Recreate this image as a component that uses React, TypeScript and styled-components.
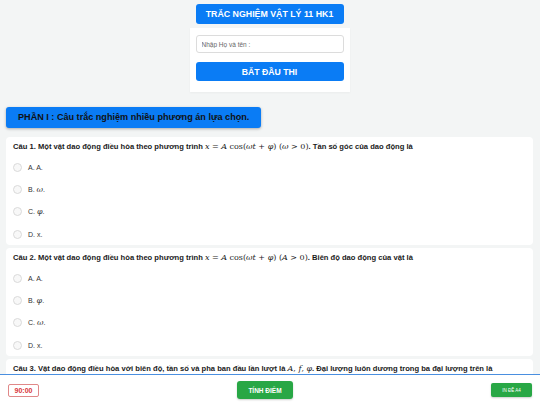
import React from 'react';
import styled, { createGlobalStyle } from 'styled-components';

type Question = {
  label: string;
  text: React.ReactNode;
  options: React.ReactNode[];
};

const M = ({ children }: { children: React.ReactNode }) => <MathSpan>{children}</MathSpan>;

const questions: Question[] = [
  {
    label: 'Câu 1.',
    text: (
      <>
        Một vật dao động điều hòa theo phương trình <M><i>x</i> = <i>A</i> cos(<i>ωt</i> + <i>φ</i>) (<i>ω</i> &gt; 0)</M>. Tần số góc của dao động là
      </>
    ),
    options: ['A. A.', <>B. <M><i>ω</i></M>.</>, <>C. <M><i>φ</i></M>.</>, 'D. x.'],
  },
  {
    label: 'Câu 2.',
    text: (
      <>
        Một vật dao động điều hòa theo phương trình <M><i>x</i> = <i>A</i> cos(<i>ωt</i> + <i>φ</i>) (<i>A</i> &gt; 0)</M>. Biên độ dao động của vật là
      </>
    ),
    options: ['A. A.', <>B. <M><i>φ</i></M>.</>, <>C. <M><i>ω</i></M>.</>, 'D. x.'],
  },
  {
    label: 'Câu 3.',
    text: (
      <>
        Vật dao động điều hòa với biên độ, tần số và pha ban đầu lần lượt là <M><i>A</i>, <i>f</i>, <i>φ</i></M>. Đại lượng luôn dương trong ba đại lượng trên là
      </>
    ),
    options: ['A. A.', 'B. f.', 'C. φ.', 'D. không có.'],
  },
];

export default function App() {
  return (
    <>
      <GlobalStyle />
      <Screen>
        <Main>
          <Header>
            <TitleButton>TRẮC NGHIỆM VẬT LÝ 11 HK1</TitleButton>
            <StartCard>
              <NameInput placeholder="Nhập Họ và tên :" />
              <StartButton>BẮT ĐẦU THI</StartButton>
            </StartCard>
          </Header>

          <SectionTitle>PHẦN I : Câu trắc nghiệm nhiều phương án lựa chọn.</SectionTitle>

          <QuestionList>
            {questions.map((q, qi) => (
              <QuestionCard key={qi}>
                <QuestionText>
                  <b>{q.label}</b> {q.text}
                </QuestionText>
                {q.options.map((opt, oi) => (
                  <Option key={oi}>
                    <Radio type="radio" name={`q${qi}`} />
                    <span>{opt}</span>
                  </Option>
                ))}
              </QuestionCard>
            ))}
          </QuestionList>
        </Main>

        <Footer>
          <Timer>90:00</Timer>
          <ScoreButton>TÍNH ĐIỂM</ScoreButton>
          <PrintButton>IN ĐỀ A4</PrintButton>
        </Footer>
      </Screen>
    </>
  );
}

const GlobalStyle = createGlobalStyle`
  * { box-sizing: border-box; }
  body {
    margin: 0;
    background: #f3f5f5;
    font-family: "Liberation Sans", Arial, sans-serif;
    color: #222;
    overflow: hidden;
  }
`;

const Screen = styled.div`
  height: 100vh;
  display: flex;
  flex-direction: column;
`;

const Main = styled.div`
  flex: 1;
  min-height: 0;
  overflow: hidden;
  padding: 4px 7px 0 6px;
`;

const Header = styled.div`
  display: flex;
  flex-direction: column;
  align-items: center;
  gap: 4px;
`;

const TitleButton = styled.div`
  width: 148px;
  height: 20px;
  display: flex;
  align-items: center;
  justify-content: center;
  background: #0a7cf5;
  color: #fff;
  font-weight: bold;
  font-size: 8.8px;
  border-radius: 3px;
`;

const StartCard = styled.div`
  width: 160px;
  background: #fff;
  padding: 7px 6px 11px;
  display: flex;
  flex-direction: column;
  gap: 9px;
  box-shadow: 0 1px 2px rgba(0, 0, 0, 0.04);
`;

const NameInput = styled.input`
  height: 18px;
  border: 1px solid #dcdcdc;
  border-radius: 3px;
  padding: 0 5px;
  font-size: 6.5px;
  font-family: inherit;
  &::placeholder { color: #666; }
`;

const StartButton = styled.button`
  height: 19px;
  border: none;
  border-radius: 3px;
  background: #0a7cf5;
  color: #fff;
  font-family: inherit;
  font-weight: bold;
  font-size: 8.7px;
`;

const SectionTitle = styled.div`
  display: inline-block;
  margin-top: 15px;
  height: 21px;
  line-height: 21px;
  padding: 0 12px;
  background: #0a7cf5;
  color: #111;
  font-weight: bold;
  font-size: 9.1px;
  border-radius: 3px;
  box-shadow: 0 1px 3px rgba(0, 0, 0, 0.3);
`;

const QuestionList = styled.div`
  margin-top: 9px;
  display: flex;
  flex-direction: column;
  gap: 3px;
`;

const QuestionCard = styled.div`
  background: #fff;
  border-radius: 4px;
  padding: 4px 7px 0;
`;

const QuestionText = styled.div`
  font-weight: bold;
  font-size: 7.6px;
  line-height: 11px;
  color: #1a1a1a;
  margin-bottom: 4px;
`;

const MathSpan = styled.span`
  font-family: "DejaVu Serif", "Liberation Serif", serif;
  font-weight: normal;
  font-size: 8px;
  i { font-style: italic; }
`;

const Option = styled.label`
  display: flex;
  align-items: center;
  gap: 6px;
  height: 22.3px;
  font-size: 7px;
  color: #333;
`;

const Radio = styled.input`
  appearance: none;
  margin: 0;
  width: 9px;
  height: 9px;
  border: 1px solid #dadada;
  border-radius: 50%;
  background: #f8f8f8;
`;

const Footer = styled.div`
  flex: 0 0 31px;
  background: #fff;
  border-top: 1.5px solid #4a8fe0;
  display: flex;
  align-items: center;
  justify-content: space-between;
  padding: 0 8px;
`;

const Timer = styled.div`
  width: 31px;
  height: 13px;
  display: flex;
  align-items: center;
  justify-content: center;
  border: 1px solid #e08888;
  border-radius: 2px;
  color: #d9343a;
  font-weight: bold;
  font-size: 7px;
`;

const ScoreButton = styled.button`
  width: 56px;
  height: 18px;
  border: none;
  border-radius: 3px;
  background: #28a745;
  color: #fff;
  font-family: inherit;
  font-weight: bold;
  font-size: 6.5px;
  box-shadow: 0 1px 2px rgba(0, 0, 0, 0.2);
`;

const PrintButton = styled.button`
  width: 41px;
  height: 14px;
  border: none;
  border-radius: 2px;
  background: #28a745;
  color: #fff;
  font-family: inherit;
  font-size: 4.5px;
  box-shadow: 0 1px 2px rgba(0, 0, 0, 0.2);
`;
